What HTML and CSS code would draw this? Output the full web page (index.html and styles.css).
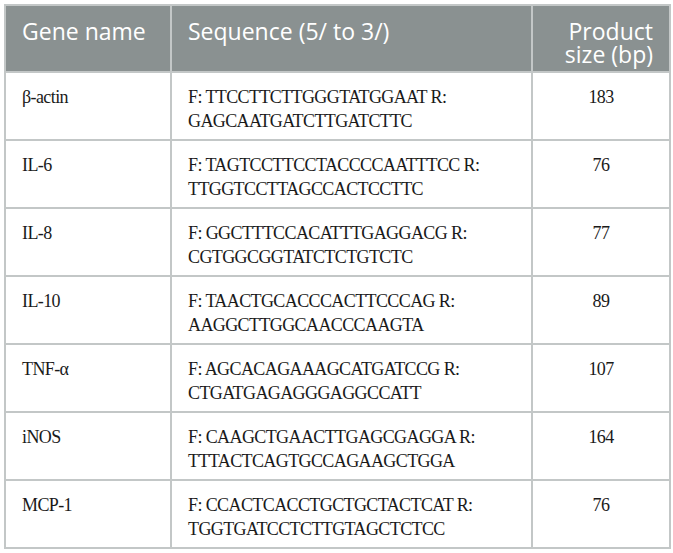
FILE: index.html
```html
<!DOCTYPE html>
<html>
<head>
<meta charset="utf-8">
<link rel="stylesheet" href="styles.css">
</head>
<body>
<table class="primers">
  <colgroup>
    <col class="c-gene">
    <col class="c-seq">
    <col class="c-size">
  </colgroup>
  <thead>
    <tr>
      <th>Gene name</th>
      <th>Sequence (5/ to 3/)</th>
      <th class="right">Product size (bp)</th>
    </tr>
  </thead>
  <tbody>
    <tr><td>β-actin</td><td>F: TTCCTTCTTGGGTATGGAAT R: GAGCAATGATCTTGATCTTC</td><td class="num">183</td></tr>
    <tr><td>IL-6</td><td>F: TAGTCCTTCCTACCCCAATTTCC R: TTGGTCCTTAGCCACTCCTTC</td><td class="num">76</td></tr>
    <tr><td>IL-8</td><td>F: GGCTTTCCACATTTGAGGACG R: CGTGGCGGTATCTCTGTCTC</td><td class="num">77</td></tr>
    <tr><td>IL-10</td><td>F: TAACTGCACCCACTTCCCAG R: AAGGCTTGGCAACCCAAGTA</td><td class="num">89</td></tr>
    <tr><td>TNF-α</td><td>F: AGCACAGAAAGCATGATCCG R: CTGATGAGAGGGAGGCCATT</td><td class="num">107</td></tr>
    <tr><td>iNOS</td><td>F: CAAGCTGAACTTGAGCGAGGA R: TTTACTCAGTGCCAGAAGCTGGA</td><td class="num">164</td></tr>
    <tr><td>MCP-1</td><td>F: CCACTCACCTGCTGCTACTCAT R: TGGTGATCCTCTTGTAGCTCTCC</td><td class="num">76</td></tr>
  </tbody>
</table>
</body>
</html>
```

FILE: styles.css
```css
html, body {
  margin: 0;
  padding: 0;
  background: #ffffff;
}
body {
  padding: 4px 0 0 4px;
}
.primers {
  border-collapse: collapse;
  width: 665px;
  table-layout: fixed;
  border: 2px solid #c3c7c7;
}
.c-gene { width: 166px; }
.c-seq { width: 361px; }
.c-size { width: 138px; }
.primers th {
  background: #8a9191;
  color: #ffffff;
  font-family: "Open Sans", "Liberation Sans", sans-serif;
  font-weight: 400;
  font-size: 23px;
  line-height: 23px;
  text-align: left;
  vertical-align: top;
  padding: 14px 16px 5px 16px;
  border: 2px solid #c3c7c7;
}
.primers th.right {
  text-align: right;
}
.primers td {
  font-family: "Liberation Serif", "Times New Roman", serif;
  font-size: 18px;
  letter-spacing: -0.6px;
  line-height: 24px;
  color: #1a1a1a;
  vertical-align: top;
  padding: 12px 16px 6px 16px;
  border: 2px solid #c3c7c7;
}
.primers td.num {
  text-align: center;
}
```
